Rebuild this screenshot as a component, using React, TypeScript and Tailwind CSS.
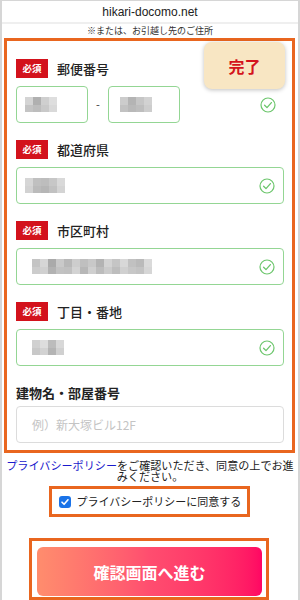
import React from 'react';

const FONT = { fontFamily: '"Noto Sans CJK JP", "Noto Sans", sans-serif' };

type Cell = string[];

const MOSAIC: Record<string, Cell[]> = {
  zip1: [['#d4d4d4', '#c4c4c4'], ['#b0b0b0', '#bdbdbd'], ['#cfcfcf', '#c9c9c9'], ['#dedede', '#d9d9d9']],
  zip2: [['#cccccc', '#c2c2c2'], ['#b4b4b4', '#b9b9b9'], ['#c6c6c6', '#bebebe'], ['#d2d2d2', '#cdcdcd']],
  pref: [['#d6d6d6', '#d2d2d2'], ['#c0c0c0', '#bbbbbb'], ['#bdbdbd', '#b6b6b6'], ['#c7c7c7', '#c1c1c1'], ['#d9d9d9', '#d4d4d4']],
  city: [
    ['#c4c4c4', '#cccccc'], ['#d6d6d6', '#d0d0d0'], ['#aaaaaa', '#b2b2b2'], ['#c9c9c9', '#c2c2c2'],
    ['#b8b8b8', '#c0c0c0'], ['#cdcdcd', '#d3d3d3'], ['#bfbfbf', '#b7b7b7'], ['#c8c8c8', '#cfcfcf'],
    ['#b3b3b3', '#bcbcbc'], ['#d3d3d3', '#cbcbcb'], ['#c5c5c5', '#bdbdbd'], ['#d8d8d8', '#d0d0d0'],
    ['#c1c1c1', '#c7c7c7'], ['#bababa', '#c3c3c3'], ['#dadada', '#d6d6d6'],
  ],
  block: [['#d0d0d0', '#c8c8c8'], ['#dddddd', '#d2d2d2'], ['#bcbcbc', '#b4b4b4'], ['#d8d8d8', '#d0d0d0']],
};

function Mosaic({ name }: { name: string }) {
  return (
    <div className="flex">
      {MOSAIC[name].map((c, i) => (
        <div key={i} className="flex flex-col">
          <div className="w-[8px] h-[8px]" style={{ background: c[0] }} />
          <div className="w-[8px] h-[7px]" style={{ background: c[1] }} />
        </div>
      ))}
    </div>
  );
}

function Check() {
  return (
    <svg width="16" height="16" viewBox="0 0 16 16" fill="none" className="shrink-0">
      <circle cx="8" cy="8" r="7" stroke="#6cc66c" strokeWidth="1.2" />
      <path d="M4.6 8.2 L7 10.6 L11.4 5.6" stroke="#6cc66c" strokeWidth="1.3" strokeLinecap="round" strokeLinejoin="round" />
    </svg>
  );
}

function Label({ text, required = true }: { text: string; required?: boolean }) {
  return (
    <div className="flex items-center h-[19px] gap-[9px]">
      {required && (
        <span className="w-[32px] h-[19px] bg-[#d3121c] text-white text-[9.5px] font-bold flex items-center justify-center">
          必須
        </span>
      )}
      <span className={`text-[13px] text-[#222] leading-none ${required ? 'font-medium' : 'font-bold'}`}>{text}</span>
    </div>
  );
}

function Field({ label, mosaic, pad }: { label: string; mosaic: string; pad: string }) {
  return (
    <div className="flex flex-col gap-[8px]">
      <Label text={label} />
      <div className={`h-[37px] border border-[#94d694] rounded-[4px] flex items-center justify-between pr-[8px] ${pad}`}>
        <Mosaic name={mosaic} />
        <Check />
      </div>
    </div>
  );
}

export default function App() {
  return (
    <div className="relative w-[300px] h-[600px] bg-white border-x-2 border-t border-[#d6d6d6] overflow-hidden" style={FONT}>
      <div className="h-[23px] flex items-center justify-center text-[12px] text-[#222] border-b-2 border-[#efefef]" style={{ fontFamily: '"Liberation Sans", Arial, sans-serif' }}>
        hikari-docomo.net
      </div>
      <div className="h-[14px] flex items-center justify-center text-[9px] text-[#333]">※または、お引越し先のご住所</div>

      <div className="ml-[2px] w-[291px] border-[3px] border-[#e9661f] pt-[18px] pl-[9px] pr-[8px] pb-[7px] flex flex-col gap-[17px]">
        <div className="flex flex-col gap-[8px]">
          <Label text="郵便番号" />
          <div className="flex items-center">
            <div className="w-[72px] h-[37px] border border-[#94d694] rounded-[4px] flex items-center pl-[8px]">
              <Mosaic name="zip1" />
            </div>
            <span className="w-[20px] text-center text-[11px] text-[#333]">-</span>
            <div className="w-[72px] h-[37px] border border-[#94d694] rounded-[4px] flex items-center pl-[11px]">
              <Mosaic name="zip2" />
            </div>
            <div className="flex-1 flex justify-end pr-[8px]">
              <Check />
            </div>
          </div>
        </div>
        <Field label="都道府県" mosaic="pref" pad="pl-[8px]" />
        <Field label="市区町村" mosaic="city" pad="pl-[15px]" />
        <Field label="丁目・番地" mosaic="block" pad="pl-[15px]" />
        <div className="flex flex-col gap-[4px]">
          <Label text="建物名・部屋番号" required={false} />
          <div className="h-[37px] border border-[#dcdcdc] rounded-[4px] flex items-center pl-[15px] text-[12px] text-[#c4c4c4]">
            例）新大塚ビル12F
          </div>
        </div>
      </div>

      <p className="mt-[7px] px-[3px] text-center text-[11.1px] leading-[11px] text-[#222]">
        <span className="text-[#1a1acc]">プライバシーポリシー</span>をご確認いただき、同意の上でお進みください。
      </p>

      <div className="mt-[4px] flex justify-center">
        <div className="w-[201px] h-[31px] border-[3px] border-[#e9661f] flex items-center gap-[6px] pl-[7px] -ml-[2px]">
          <span className="w-[12px] h-[12px] rounded-[3px] bg-[#1a73e8] flex items-center justify-center">
            <svg width="10" height="10" viewBox="0 0 10 10" fill="none">
              <path d="M2 5.2 L4.1 7.3 L8 2.8" stroke="white" strokeWidth="1.6" strokeLinecap="round" strokeLinejoin="round" />
            </svg>
          </span>
          <span className="text-[11px] text-[#222]">プライバシーポリシーに同意する</span>
        </div>
      </div>

      <div className="mt-[21px] flex justify-center">
        <div className="w-[240px] h-[62px] border-[3px] border-[#e9661f] pt-[6px] pl-[5px] pr-[4px] -ml-[2px]">
          <div className="h-[49px] rounded-[6px] bg-gradient-to-r from-[#ff8d6d] via-[#ff4d6f] to-[#ff0563] flex items-center justify-center text-white text-[16px] font-bold">
            確認画面へ進む
          </div>
        </div>
      </div>

      <div className="absolute left-[202px] top-[41px] w-[81px] h-[47px] rounded-[8px] bg-[#f8e6c3] shadow-[0_1px_4px_rgba(0,0,0,0.25)] flex items-center justify-center text-[16px] font-bold text-[#d4131c]">
        完了
      </div>
    </div>
  );
}
